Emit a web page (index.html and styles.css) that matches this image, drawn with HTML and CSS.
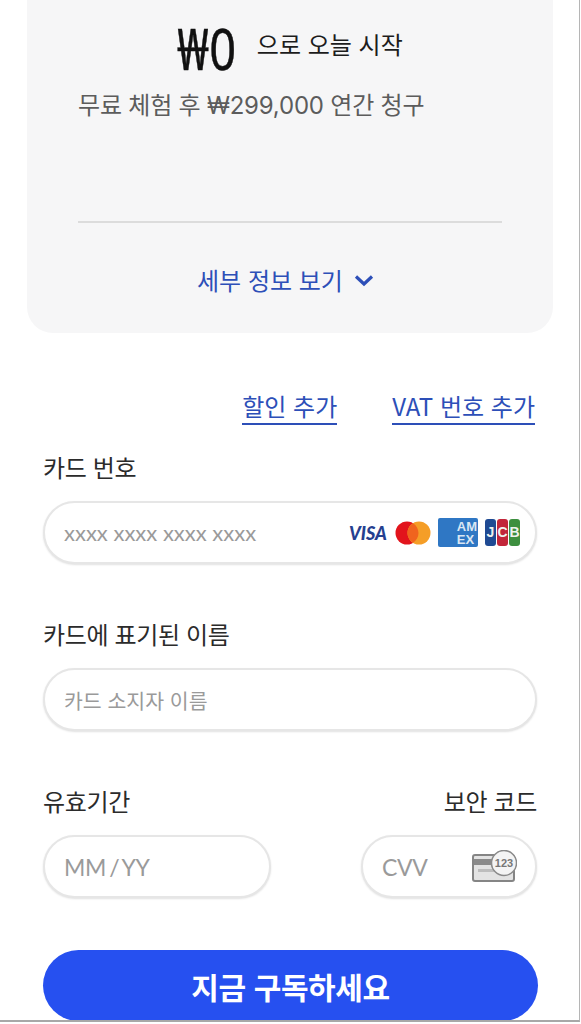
FILE: index.html
```html
<!DOCTYPE html>
<html lang="ko">
<head>
<meta charset="utf-8">
<title>결제</title>
<link rel="stylesheet" href="styles.css">
</head>
<body>
<div class="frame">
  <section class="summary">
    <div class="headline"><span class="price">₩0</span><span class="start">으로 오늘 시작</span></div>
    <p class="billing">무료 체험 후 <span class="amount">₩299,000</span> 연간 청구</p>
    <div class="rule"></div>
    <div class="details"><span>세부 정보 보기</span>
      <svg class="chev" viewBox="0 0 20 13" width="20" height="13"><path d="M2 2.500 10 10 18 2.500" fill="none" stroke="#2d4fb8" stroke-width="3.200"/></svg>
    </div>
  </section>
  <form class="form">
    <div class="links"><a>할인 추가</a><a>VAT 번호 추가</a></div>
    <label class="label">카드 번호</label>
    <div class="input">
      <span class="ph latin">xxxx xxxx xxxx xxxx</span>
      <div class="cards">
        <span class="visa">VISA</span>
        <svg class="mc" width="36" height="24" viewBox="0 0 36 24"><circle cx="12" cy="12" r="11.500" fill="#e2141c"/><circle cx="24" cy="12" r="11.500" fill="#f59e27"/><path d="M18 2.200a11.500 11.500 0 0 1 0 19.600a11.500 11.500 0 0 1 0-19.600z" fill="#f0641e"/></svg>
        <span class="amex"><span>AM<br>EX</span></span>
        <span class="jcb"><i class="j">J</i><i class="c">C</i><i class="b">B</i></span>
      </div>
    </div>
    <label class="label second">카드에 표기된 이름</label>
    <div class="input"><span class="ph">카드 소지자 이름</span></div>
    <div class="split-labels"><label class="label">유효기간</label><label class="label">보안 코드</label></div>
    <div class="split">
      <div class="input exp"><span class="ph latin big">MM / YY</span></div>
      <div class="input cvv"><span class="ph latin big">CVV</span>
        <svg class="cvv-icon" width="45" height="33" viewBox="0 0 45 33">
          <rect x="1" y="5" width="41" height="26" rx="2" fill="#e3e3e3" stroke="#858585" stroke-width="2"/>
          <rect x="2" y="9" width="39" height="6" fill="#8a8a8a"/>
          <rect x="6" y="19" width="20" height="3" fill="#bdbdbd"/>
          <circle cx="32" cy="13" r="12.500" fill="#f4f4f4" stroke="#8a8a8a" stroke-width="1.500"/>
          <text x="32" y="17" class="cvv-num" text-anchor="middle">123</text>
        </svg>
      </div>
    </div>
    <button class="submit" type="button">지금 구독하세요</button>
  </form>
</div>
</body>
</html>
```
FILE: styles.css
```css
* { box-sizing: border-box; }
html, body { margin: 0; height: 1024px; overflow: hidden; background: #fff; }
body { font-family: "Noto Sans CJK KR", "Noto Sans", sans-serif; color: #2b2b2b; }
.frame {
  width: 580px; height: 1022px; overflow: hidden; background: #fff;
  border-right: 1px solid #b5b5b5; border-bottom: 2px solid #a8a8a8;
  padding: 0 42px 0 43px;
}
.summary {
  margin: 0 -16px 0 -16px; height: 333px; background: #f6f6f7;
  border-radius: 0 0 26px 26px; padding: 0 51px 0 51px;
}
.headline { display: flex; align-items: center; justify-content: center; gap: 20px; height: 87px; }
.price {
  display: inline-block; font-size: 47px; line-height: 60px; color: #111; letter-spacing: 0.6px;
  font-family: "Noto Sans", sans-serif; transform: scaleY(1.22) translateY(3px);
  -webkit-text-stroke: 0.4px #111;
}
.start { font-size: 24px; line-height: 34px; color: #1c1c1c; }
.billing { margin: 0; font-size: 24px; line-height: 34px; color: #5c5c5c; white-space: nowrap; letter-spacing: -0.2px; }
.amount { font-family: "Inter", sans-serif; letter-spacing: -0.2px; }
.rule { height: 2px; background: #dcdcdc; margin-top: 98px; }
.details { display: flex; align-items: center; justify-content: center; gap: 11px; margin-top: 39px; padding-right: 9px; font-size: 24px; line-height: 36px; color: #2d4fb8; }
.links { display: flex; justify-content: flex-end; gap: 55px; padding-top: 55px; margin-right: 2px; }
.links a { font-size: 24px; line-height: 35px; color: #2d4fb8; border-bottom: 2px solid #2d4fb8; }
.label { display: block; font-size: 24px; line-height: 34px; color: #2b2b2b; letter-spacing: -0.35px; margin-bottom: 17px; }
.links + .label { margin-top: 25px; }
.label.second { margin-top: 53px; }
.input {
  height: 63px; background: #fff; border-radius: 32px; border: 2px solid #e6e6e6;
  box-shadow: 0 1px 2px rgba(0,0,0,.12); display: flex; align-items: center;
  justify-content: space-between; padding: 0 15px 0 19px;
}
.ph { font-size: 20.500px; color: #9a9a9a; white-space: nowrap; }
.latin { font-family: "Lato", sans-serif; font-size: 22px; }
.big { font-size: 23px; word-spacing: -2.500px; letter-spacing: -0.3px; }
.cards { display: flex; align-items: center; gap: 7px; }
.visa { font: italic 900 18px "Lato", sans-serif; color: #25408f; width: 39px; }
.mc { display: block; }
.amex { width: 40px; height: 29px; background: #2f77c4; border-radius: 2px; display: flex; justify-content: flex-end; align-items: center; padding-right: 1px; }
.amex span { font: 700 13px/13px "Liberation Sans", sans-serif; color: #d9e6f3; }
.jcb { display: flex; width: 35px; height: 27px; gap: 1px; }
.jcb i { flex: 1; font: 700 14px/27px "Liberation Sans", sans-serif; color: #eef2ee; text-align: center; border-radius: 3px; }
.j { background: #1f4a93; } .c { background: #c2263a; } .b { background: #3d8f3f; }
.split-labels { display: flex; justify-content: space-between; margin-top: 53px; }
.split { display: flex; justify-content: space-between; }
.exp { width: 228px; }
.cvv { width: 176px; padding-right: 18px; }
.cvv-icon { display: block; }
.cvv-num { font: 700 11px "Liberation Sans", sans-serif; fill: #777; }
.submit {
  display: block; width: 495px; height: 71px; margin-top: 52px; border: 0; border-radius: 36px;
  background: #2650f0; color: #fff; font: 700 30px "Noto Sans CJK KR", sans-serif; letter-spacing: -0.4px;
}
```
